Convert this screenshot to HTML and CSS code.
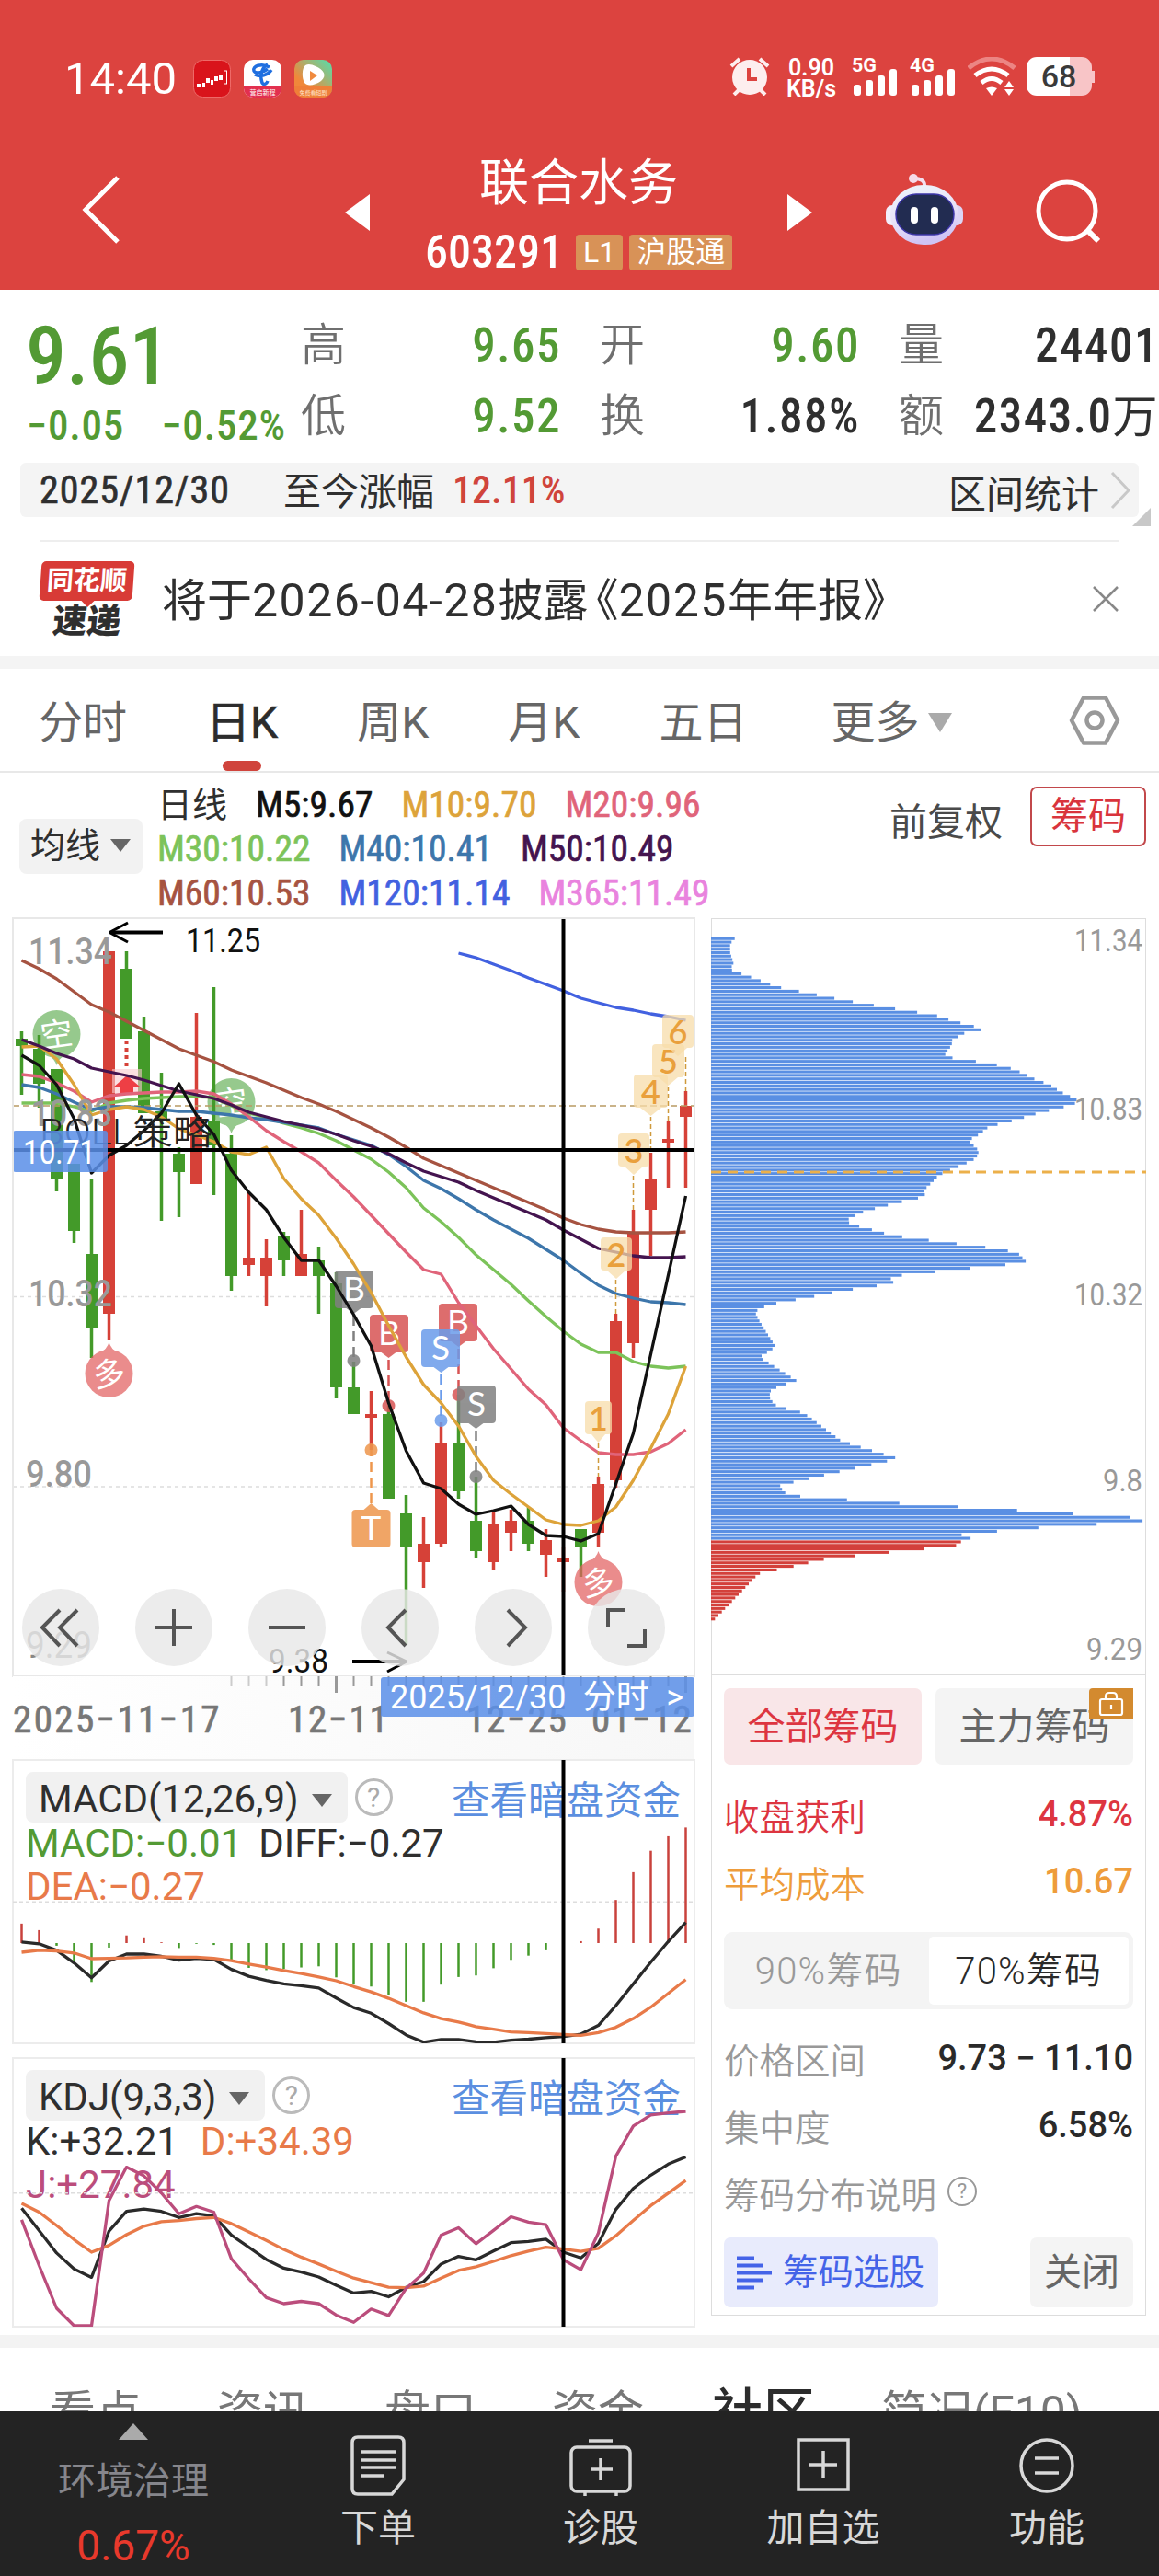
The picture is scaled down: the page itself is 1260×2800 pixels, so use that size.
FILE: index.html
```html
<!DOCTYPE html>
<html lang="zh-CN">
<head>
    <meta charset="UTF-8">
    <title>联合水务 603291</title>
    <link rel="stylesheet" href="styles.css">
</head>
<body>
<header class="top">
    <div class="status">
        <span class="clock">14:40</span>
        <svg class="app" viewBox="0 0 41 41"><rect x=".5" y=".5" width="40" height="40" rx="10" fill="#d9141b" stroke="#ee6a68"/><g fill="#fff"><rect x="4" y="26" width="5" height="4"/><rect x="10" y="25" width="3" height="5"/><rect x="14" y="20" width="4" height="5"/><rect x="19" y="22" width="3" height="5"/><rect x="23" y="18" width="4" height="5"/><rect x="28" y="16" width="4" height="6"/></g><rect x="33.500" y="12" width="3" height="14" fill="none" stroke="#fff"/></svg>
        <svg class="app" viewBox="0 0 41 41"><rect width="41" height="41" rx="10" fill="#fff"/><path d="M0 28h41v3a10 10 0 0 1-10 10H10A10 10 0 0 1 0 31z" fill="#e2304f"/><path d="M28 8c-9-5-19-1-17 4 2 4 11 1 15-2M26 5c-6 3-9 11-6 20 2 3 5 1 6-2M12 16c6 3 14 1 18-5" fill="none" stroke="#1f6fe0" stroke-width="3.500"/><text x="20.500" y="38" font-size="7" fill="#fff" text-anchor="middle">营启新程</text></svg>
        <svg class="app" viewBox="0 0 41 41"><defs><linearGradient id="play" x1="0" y1="1" x2="1" y2="0"><stop offset=".3" stop-color="#f0883a"/><stop offset="1" stop-color="#52e0ae"/></linearGradient></defs><rect width="41" height="41" rx="10" fill="url(#play)"/><path d="M0 28h41v3a10 10 0 0 1-10 10H10A10 10 0 0 1 0 31z" fill="#ef7f38"/><path d="M12 6c3-2 7-1 11 1 9 4 13 10 6 16-7 5-15 6-18 2-3-5-3-16 1-19z" fill="#fff"/><path d="M17 12l8 5-8 6z" fill="#f08a3e"/><text x="20.500" y="38" font-size="6" fill="#fde3c8" text-anchor="middle">免费看短剧</text></svg>
        <div class="status-right">
            <svg class="alarm" viewBox="0 0 44 42"><circle cx="22" cy="22" r="19" fill="#fdeeee"/><path d="M2 10l9-8M33 2l9 8M5 41l6-6M39 41l-6-6" stroke="#fdeeee" stroke-width="4"/><path d="M21 12v12h9" fill="none" stroke="#dc433f" stroke-width="4"/></svg>
            <div class="speed">0.90<br>KB/s</div>
            <svg class="signal" viewBox="0 0 50 42"><text x="0" y="16" font-size="21" font-weight="700" fill="#fff" textLength="27" lengthAdjust="spacingAndGlyphs">5G</text><g fill="#fff"><rect x="2" y="30" width="8" height="12" rx="3"/><rect x="15" y="25" width="8" height="17" rx="3"/><rect x="28" y="20" width="8" height="22" rx="3"/><rect x="41" y="13" width="8" height="29" rx="3"/></g></svg>
            <svg class="signal" viewBox="0 0 50 42"><text x="0" y="16" font-size="21" font-weight="700" fill="#fff" textLength="27" lengthAdjust="spacingAndGlyphs">4G</text><g fill="#fff"><rect x="2" y="30" width="8" height="12" rx="3"/><rect x="15" y="25" width="8" height="17" rx="3"/><rect x="28" y="20" width="8" height="22" rx="3"/><rect x="41" y="13" width="8" height="29" rx="3"/></g></svg>
            <svg class="wifi" viewBox="0 0 52 42"><g fill="none" stroke="#fff" stroke-width="5"><path d="M1 12q25-20 50 0" stroke="#ec8583"/><path d="M8 20q18-14 36 0"/><path d="M15 28q11-9 22 0"/></g><path d="M20 34q6-3 12 0l-6 8zM40 33l5-7 5 7zM40 35l5 7 5-7z" fill="#fff"/></svg>
            <svg class="battery" viewBox="0 0 74 42"><path d="M47 0h13a11 11 0 0 1 11 11v4h3v13h-3v3a11 11 0 0 1-11 11H47z" fill="#f8c5c7"/><path d="M11 0h36v42H11A11 11 0 0 1 0 31V11A11 11 0 0 1 11 0z" fill="#fff"/><text x="35" y="33" font-size="34" font-weight="500" fill="#3a3a3a" text-anchor="middle">68</text></svg>
        </div>
    </div>
    <nav class="title-bar">
        <svg class="back" viewBox="0 0 42 74"><path d="M39 2L4 37l35 35" fill="none" stroke="#fff" stroke-width="5"/></svg>
        <svg class="prev" viewBox="0 0 27 40"><path d="M27 0v40L0 20z" fill="#fff"/></svg>
        <div class="stock">
            <div class="stock-name">联合水务</div>
            <div class="stock-code"><span class="code">603291</span><span class="tag">L1</span><span class="tag">沪股通</span></div>
        </div>
        <svg class="next" viewBox="0 0 27 40"><path d="M0 0v40l27-20z" fill="#fff"/></svg>
        <svg class="robot" viewBox="0 0 84 78"><defs><linearGradient id="head" x1="0" y1="0" x2=".3" y2="1"><stop offset="0" stop-color="#eef6fb"/><stop offset=".6" stop-color="#e8e2f8"/><stop offset="1" stop-color="#cfc4f5"/></linearGradient></defs><path d="M42 14c1-7-5-9-11-9" fill="none" stroke="#f3dfee" stroke-width="4"/><circle cx="30" cy="5" r="5" fill="#f6dbe9"/><rect x="0" y="34" width="14" height="22" rx="7" fill="#f2eefb"/><rect x="70" y="34" width="14" height="22" rx="7" fill="#dcd5f5"/><rect x="5" y="12" width="74" height="65" rx="36" fill="url(#head)"/><rect x="11" y="22" width="63" height="44" rx="22" fill="#222c51" stroke="#3d36a8" stroke-width="1.500"/><rect x="27" y="36" width="8" height="18" rx="4" fill="#fff"/><rect x="49" y="36" width="8" height="18" rx="4" fill="#fff"/></svg>
        <svg class="search" viewBox="0 0 70 70"><circle cx="34" cy="34" r="31" fill="none" stroke="#fff" stroke-width="5"/><path d="M56 55l12 12" stroke="#fff" stroke-width="6"/></svg>
    </nav>
</header>

<section class="quote">
    <div class="price">
        <div class="last">9.61</div>
        <div class="change"><span>−0.05</span><span>−0.52%</span></div>
    </div>
    <div class="stats">
        <div class="stat"><label>高</label><b class="down">9.65</b></div>
        <div class="stat"><label>开</label><b class="down">9.60</b></div>
        <div class="stat"><label>量</label><b>24401</b></div>
        <div class="stat"><label>低</label><b class="down">9.52</b></div>
        <div class="stat"><label>换</label><b>1.88%</b></div>
        <div class="stat"><label>额</label><b>2343.0<i>万</i></b></div>
    </div>
</section>

<section class="range">
    <span class="range-date">2025/12/30</span>
    <span class="range-label">至今涨幅</span>
    <span class="range-pct">12.11%</span>
    <span class="range-stat">区间统计</span>
    <svg class="range-arrow" viewBox="0 0 22 42"><path d="M2 2l18 19L2 40" fill="none" stroke="#c8c8c8" stroke-width="3"/></svg>
    <i class="corner"></i>
</section>

<section class="notice">
    <div class="badge"><div class="badge-top">同花顺</div><div class="badge-bottom">速递</div></div>
    <div class="notice-text">将于<span>2026-04-28</span>披露<em>《</em><span>2025</span>年年报》</div>
    <svg class="close" viewBox="0 0 30 30"><path d="M2 2l26 26M28 2L2 28" stroke="#888" stroke-width="2.500"/></svg>
</section>

<nav class="period">
    <span>分时</span>
    <span class="on">日K</span>
    <span>周K</span>
    <span>月K</span>
    <span>五日</span>
    <span>更多<i class="tri"></i></span>
    <svg class="gear" viewBox="0 0 56 54"><path d="M16 2.500h24L53 27 40 51.500H16L3 27z" fill="none" stroke="#999" stroke-width="4.500" stroke-linejoin="round"/><circle cx="28" cy="27" r="8.500" fill="none" stroke="#999" stroke-width="4.500"/></svg>
</nav>

<section class="ma">
    <div class="ma-btn">均线<i class="tri"></i></div>
    <div class="ma-list">
        <div><em>日线</em><span class="m5">M5:9.67</span><span class="m10">M10:9.70</span><span class="m20">M20:9.96</span></div>
        <div><span class="m30">M30:10.22</span><span class="m40">M40:10.41</span><span class="m50">M50:10.49</span></div>
        <div><span class="m60">M60:10.53</span><span class="m120">M120:11.14</span><span class="m365">M365:11.49</span></div>
    </div>
    <div class="ma-right"><span>前复权</span><span class="chip-btn">筹码</span></div>
</section>

<main class="charts">
    <div class="left">
        <div class="kline">
            <svg id="kline" width="741" height="823" viewBox="14 998 741 823"></svg>
            <div class="tools">
                <svg viewBox="0 0 84 84"><path d="M41 23L22 42l19 20M60 23L41 42l19 20"/></svg>
                <svg viewBox="0 0 84 84"><path d="M22 42h40M42 22v40"/></svg>
                <svg viewBox="0 0 84 84"><path d="M22 42h40"/></svg>
                <svg viewBox="0 0 84 84"><path d="M48 23L29 42l19 20"/></svg>
                <svg viewBox="0 0 84 84"><path d="M36 23l19 19-19 20"/></svg>
                <svg viewBox="0 0 84 84"><path d="M22 41V23h19M43 62h19V44"/></svg>
            </div>
        </div>
        <div class="axis">
            <svg id="ticks" width="741" height="20" viewBox="14 1822 741 20"></svg>
            <div class="dates"><span>2025−11−17</span><span>12−11</span><span>12−25</span><span>01−12</span></div>
            <div class="day-tip"><span>2025/12/30</span><span>分时</span><span>&gt;</span></div>
        </div>
        <div class="indicator macd">
            <svg id="macd" class="plot" width="741" height="308"></svg>
            <div class="ind-head"><span class="pill">MACD(12,26,9)<i class="tri"></i></span><span class="help">?</span><a>查看暗盘资金</a></div>
            <div class="ind-val"><span class="down">MACD:−0.01</span><span>DIFF:−0.27</span></div>
            <div class="ind-val"><span class="dea">DEA:−0.27</span></div>
        </div>
        <div class="indicator kdj">
            <svg id="kdj" class="plot" width="741" height="292"></svg>
            <div class="ind-head"><span class="pill">KDJ(9,3,3)<i class="tri"></i></span><span class="help">?</span><a>查看暗盘资金</a></div>
            <div class="ind-val"><span>K:+32.21</span><span class="dea">D:+34.39</span></div>
            <div class="ind-val"><span class="j">J:+27.84</span></div>
        </div>
    </div>

    <div class="chips">
        <svg id="chips" width="473" height="821" viewBox="773 998 473 821"></svg>
        <div class="chip-panel">
            <div class="chip-tabs">
                <span class="on">全部筹码</span>
                <span>主力筹码<svg class="lock" viewBox="0 0 48 34"><path d="M4 0h44v34H0V4a4 4 0 0 1 4-4z" fill="#d38a2f"/><g fill="none" stroke="#fff" stroke-width="2.200"><rect x="12" y="12" width="24" height="17" rx="2"/><path d="M18 12V9q0-4 4-4h4q4 0 4 4v3M24 18v5"/></g></svg></span>
            </div>
            <div class="row red"><span>收盘获利</span><b>4.87%</b></div>
            <div class="row gold"><span>平均成本</span><b>10.67</b></div>
            <div class="segment"><span>90%筹码</span><span class="on">70%筹码</span></div>
            <div class="row"><span>价格区间</span><b>9.73 − 11.10</b></div>
            <div class="row"><span>集中度</span><b>6.58%</b></div>
            <div class="row"><span>筹码分布说明</span><span class="help">?</span></div>
            <div class="chip-foot">
                <span class="pick"><svg viewBox="0 0 38 37"><path d="M0 2.500h19M0 10.500h29M0 18.500h38M0 26.500h29M0 34.500h19" stroke="#4463e8" stroke-width="4"/></svg>筹码选股</span>
                <span class="shut">关闭</span>
            </div>
        </div>
    </div>
</main>

<nav class="news">
    <span>看点</span><span>资讯</span><span>盘口</span><span>资金</span><span class="on">社区</span><span>简况(F10)</span>
</nav>

<footer class="dock">
    <div class="sector"><i></i><span>环境治理</span><b>0.67%</b></div>
    <div class="item"><svg viewBox="0 0 70 66"><path d="M13 2h44q6 0 6 6v40L50 64H13q-6 0-6-6V8q0-6 6-6zM16 18h38M16 27h38M16 35h38M16 44h26"/></svg><span>下单</span></div>
    <div class="item"><svg viewBox="0 0 70 66"><rect x="3" y="13" width="64" height="48" rx="6"/><path d="M22 6h26M24 37h24M35 25v24M18 62v4M52 62v4"/></svg><span>诊股</span></div>
    <div class="item"><svg viewBox="0 0 70 66"><rect x="8" y="5" width="54" height="54"/><path d="M20 32h30M35 17v30"/></svg><span>加自选</span></div>
    <div class="item"><svg viewBox="0 0 70 66"><circle cx="35" cy="33" r="28"/><path d="M22 25h26M22 41h26"/></svg><span>功能</span></div>
</footer>
<script src="charts.js"></script>
</body>
</html>
```
FILE: styles.css
```css
* {
    box-sizing: border-box;
}

body, p, nav {
    margin: 0;
    padding: 0;
}

body {
    width: 1260px;
    height: 2800px;
    overflow: hidden;
    background: #fff;
    color: #2f2f2f;
    font-family: Roboto, "Noto Sans CJK SC", sans-serif;
    font-size: 41px;
}

svg {
    display: block;
    flex: none;
}

i, em {
    font-style: normal;
}

.down {
    color: #539a34;
}

.tri {
    display: inline-block;
    border: 11px solid transparent;
    border-top: 14px solid #666;
    border-bottom: 0;
}

.help {
    display: block;
    width: 41px;
    height: 41px;
    border: 3px solid #bbb;
    border-radius: 50%;
    color: #aaa;
    font-size: 30px;
    line-height: 36px;
    text-align: center;
}

/* header */
.top {
    height: 315px;
    background: #dc433f;
    color: #fff;
}

.status {
    display: flex;
    align-items: center;
    height: 170px;
    padding: 0 70px;
}

.clock {
    width: 140px;
    font-size: 49px;
}

.app {
    width: 41px;
    height: 41px;
    margin-right: 14px;
}

.status-right {
    display: flex;
    margin-left: auto;
}

.alarm {
    width: 44px;
    height: 42px;
    margin-right: 17px;
}

.speed {
    width: 56px;
    margin-right: 16px;
    font-size: 25px;
    font-weight: 600;
    line-height: 23px;
    text-align: center;
}

.signal {
    width: 50px;
    height: 42px;
    margin-right: 13px;
}

.wifi {
    width: 52px;
    height: 42px;
    margin-right: 12px;
}

.battery {
    width: 74px;
    height: 42px;
}

.title-bar {
    display: flex;
    height: 145px;
    padding-left: 89px;
}

.back {
    width: 42px;
    height: 74px;
    margin-top: 21px;
}

.prev, .next {
    width: 27px;
    height: 40px;
    margin-top: 41px;
}

.prev {
    margin-left: 244px;
}

.stock {
    width: 454px;
    text-align: center;
}

.stock-name {
    height: 76px;
    padding-top: 3px;
    font-size: 54px;
    line-height: 54px;
}

.stock-code {
    display: flex;
    align-items: center;
    height: 56px;
    padding-left: 60px;
}

.code {
    width: 147px;
    margin-right: 17px;
    font-size: 50px;
    font-stretch: 75%;
    font-weight: 500;
    text-align: left;
}

.tag {
    height: 39px;
    margin-right: 7px;
    padding: 0 8px;
    border-radius: 4px;
    background: #d89257;
    font-size: 32px;
    line-height: 38px;
}

.robot {
    width: 84px;
    height: 78px;
    margin: 19px 0 0 80px;
}

.search {
    width: 70px;
    height: 70px;
    margin: 25px 0 0 79px;
}

/* quote */
.quote {
    display: flex;
    height: 188px;
    padding: 26px 0 0 28px;
}

.price {
    width: 299px;
    color: #539a34;
    font-weight: 500;
    font-stretch: 75%;
}

.last {
    height: 96px;
    font-size: 88px;
    line-height: 92px;
}

.change {
    display: flex;
    justify-content: space-between;
    padding: 0 16px 0 1px;
    font-size: 45px;
    font-stretch: 87%;
    letter-spacing: .8px;
    line-height: 52px;
}

.stats {
    display: grid;
    grid-template-columns: 281px 281px 281px;
    grid-auto-rows: 77px;
    column-gap: 44px;
}

.stat {
    display: flex;
    justify-content: space-between;
    line-height: 70px;
}

.stat label {
    color: #6f6f6f;
    font-size: 49px;
    font-weight: 350;
}

.stat b {
    margin-right: -2px;
    font-size: 51px;
    font-weight: 500;
    font-stretch: 83%;
    letter-spacing: 1.500px;
    white-space: nowrap;
}

.stat i {
    font-size: 49px;
    font-weight: 400;
}

.range {
    position: relative;
    display: flex;
    align-items: center;
    height: 59px;
    margin: 0 22px;
    padding: 0 9px 0 21px;
    border-radius: 6px;
    background: #f4f4f4;
}

.range-date {
    width: 265px;
    font-size: 42px;
    font-stretch: 77%;
    letter-spacing: 1px;
    -webkit-text-stroke: .7px;
}

.range-label {
    margin: -3px 20px 0 0;
}

.range-pct {
    color: #d0443c;
    font-size: 42px;
    font-stretch: 81%;
    font-weight: 500;
}

.range-stat {
    margin: 3px 12px 0 auto;
}

.range-arrow {
    width: 22px;
    height: 42px;
}

.corner {
    position: absolute;
    right: -13px;
    bottom: -10px;
    border: 10px solid #c8c8c8;
    border-top-color: transparent;
    border-left-color: transparent;
}

.notice {
    display: flex;
    align-items: center;
    height: 126px;
    margin: 25px 43px 0;
    border-top: 2px solid #eee;
}

.badge {
    width: 101px;
    margin: 0 31px 0 1px;
    line-height: 1;
    text-align: center;
}

.badge-top {
    position: relative;
    height: 43px;
    background: #d83b36;
    border-radius: 5px;
    color: #fff;
    font-size: 29px;
    font-weight: 700;
    line-height: 42px;
    transform: skewX(-4deg);
}

.badge-top::after {
    content: "";
    position: absolute;
    left: 45px;
    top: 42px;
    border: 8px solid transparent;
    border-top-color: #d83b36;
    border-bottom: 0;
}

.badge-bottom {
    margin-top: 6px;
    font-size: 37px;
    font-weight: 900;
    line-height: 34px;
    transform: skewX(-6deg);
}

.notice-text {
    margin-top: -5px;
    font-size: 49px;
    white-space: nowrap;
}

.notice-text span {
    font-size: 50px;
    letter-spacing: 1.500px;
}

.notice-text em {
    margin-left: -16px;
}

.close {
    width: 30px;
    height: 30px;
    margin-left: auto;
}

/* period tabs */
.period {
    position: relative;
    display: flex;
    height: 127px;
    padding: 0 42px;
    border-top: 14px solid #f4f4f4;
    border-bottom: 2px solid #e8e8e8;
    color: #666;
    font-size: 48px;
    line-height: 118px;
}

.period span {
    position: relative;
    margin-right: 86px;
    white-space: nowrap;
}

.period .on {
    color: #2c2c2c;
    -webkit-text-stroke: .6px;
}

.period .on::after {
    content: "";
    position: absolute;
    left: 18px;
    bottom: 0;
    width: 42px;
    height: 11px;
    border-radius: 6px;
    background: #d0443c;
}

.period .tri {
    margin-left: 10px;
    border-width: 21px 13px 0;
    border-top-color: #aaa;
    vertical-align: 6px;
}

.period span:nth-child(6) {
    margin: 0 0 0 5px;
}

.gear {
    width: 56px;
    height: 54px;
    margin: 29px 0 0 auto;
}

.ma {
    display: flex;
    height: 158px;
    padding: 11px 14px 0 21px;
}

.ma-btn {
    width: 134px;
    height: 60px;
    margin: 39px 16px 0 0;
    padding-left: 12px;
    border-radius: 8px;
    background: #f2f2f2;
    font-size: 38px;
    line-height: 59px;
}

.ma-btn .tri {
    margin-left: 11px;
    vertical-align: 6px;
}

.ma-list {
    font-size: 39.500px;
    font-stretch: 79%;
    line-height: 48px;
    -webkit-text-stroke: .7px;
}

.ma-list div {
    display: flex;
}

.ma-list em {
    margin-right: 31px;
    font-size: 38px;
    -webkit-text-stroke: 0;
}

.ma-list span {
    margin-right: 31px;
}

.m5 { color: #111; }
.m10 { color: #dda33a; }
.m20 { color: #e0647a; }
.m30 { color: #7cc35a; }
.m40 { color: #3d76ab; }
.m50 { color: #44144f; }
.m60 { color: #a65341; }
.m120 { color: #4261e0; }
.m365 { color: #e983de; }

.ma-right {
    display: flex;
    margin-left: auto;
    color: #4a4a4a;
    line-height: 61px;
}

.ma-right span:first-child {
    margin: 13px 30px 0 0;
}

.chip-btn {
    width: 126px;
    height: 65px;
    margin-top: 4px;
    border: 2px solid #c2484b;
    border-radius: 7px;
    color: #d9343c;
    text-align: center;
}

/* charts */
.charts {
    display: flex;
    justify-content: space-between;
    height: 1540px;
    padding: 0 14px;
}

.left {
    width: 741px;
}

.kline {
    position: relative;
    height: 824px;
    outline: 2px solid #e8e8e8;
    outline-offset: -1px;
}

.tools {
    position: absolute;
    left: 10px;
    top: 729px;
    display: flex;
    gap: 39px;
}

.tools svg {
    width: 84px;
    height: 84px;
    border-radius: 50%;
    background: rgba(232, 232, 232, .82);
    fill: none;
    stroke: #555;
    stroke-width: 4;
}

.axis {
    position: relative;
    height: 91px;
    background: linear-gradient(90deg, #fff, #f7f7f7);
}

.dates {
    display: grid;
    grid-template-columns: 299px 194px 136px auto;
    color: #777;
    font-size: 41px;
    font-stretch: 79%;
    letter-spacing: 1.800px;
    line-height: 55px;
    white-space: nowrap;
}

.dates span {
    -webkit-text-stroke: .7px;
}

.dates span:first-child {
    letter-spacing: 2.400px;
}

.day-tip {
    position: absolute;
    right: 0;
    top: 1px;
    display: flex;
    justify-content: space-between;
    width: 341px;
    height: 43px;
    padding: 0 12px 0 10px;
    border-radius: 3px;
    background: rgba(91, 143, 232, .86);
    color: #fff;
    font-size: 36px;
    line-height: 44px;
}

.indicator {
    position: relative;
    outline: 2px solid #ececec;
    outline-offset: -1px;
}

.macd {
    height: 308px;
    margin-bottom: 16px;
}

.kdj {
    height: 292px;
}

.plot {
    position: absolute;
    left: 0;
    top: 0;
    z-index: 1;
}

.ind-head {
    display: flex;
    align-items: center;
    height: 67px;
    padding: 14px 15px 0 14px;
}

.pill {
    height: 55px;
    margin-right: 8px;
    padding: 0 17px 0 14px;
    border-radius: 8px;
    background: #f1f1f1;
    line-height: 59px;
    font-size: 42px;
    font-stretch: 99%;
}

.pill .tri {
    margin-left: 14px;
    vertical-align: 6px;
}

.ind-head a {
    margin-left: auto;
    color: #5b8fe0;
    font-size: 41.500px;
}

.ind-val {
    display: flex;
    gap: 18px;
    padding-left: 14px;
    font-size: 42px;
    font-stretch: 98%;
    line-height: 47px;
}

.dea {
    color: #e87a49;
}

.j {
    color: #bb4d7c;
}

.kdj .ind-val {
    gap: 24px;
    font-stretch: 92%;
}

/* chip distribution */
.chips {
    width: 473px;
    height: 1519px;
    border: 1px solid #ddd;
}

.chips > svg {
    margin-left: -1px;
}

.chip-panel {
    padding: 14px 13px 0;
    border-top: 1px solid #ddd;
}

.chip-tabs {
    display: flex;
    justify-content: space-between;
    margin-bottom: 17px;
}

.chip-tabs span {
    position: relative;
    width: 215px;
    height: 83px;
    border-radius: 7px;
    background: #f4f4f4;
    color: #666;
    line-height: 85px;
    text-align: center;
}

.chip-tabs .on {
    background: #f9e6e8;
    color: #dd3540;
}

.lock {
    position: absolute;
    right: 0;
    top: 0;
    width: 48px;
    height: 34px;
}

.row {
    display: flex;
    align-items: center;
    justify-content: space-between;
    height: 73px;
    color: #999;
    font-size: 38.500px;
    font-weight: 350;
}

.row b {
    color: #2a2a2a;
    font-size: 38px;
    font-stretch: 92%;
    font-weight: 500;
}

.row.red, .row.red b {
    color: #dd3540;
}

.row.gold, .row.gold b {
    color: #ee9c3b;
}

.row .help {
    width: 32px;
    height: 32px;
    margin: -2px auto 0 12px;
    border-width: 2px;
    border-color: #999;
    color: #999;
    font-size: 22px;
    font-weight: 400;
    line-height: 28px;
}

.segment {
    display: flex;
    height: 84px;
    margin: 19px 0 16px;
    padding: 5px;
    border-radius: 9px;
    background: #f4f4f4;
    color: #999;
    font-size: 40px;
    font-weight: 350;
    letter-spacing: 1.200px;
    line-height: 76px;
    text-align: center;
}

.segment span {
    flex: 1;
}

.segment .on {
    border-radius: 5px;
    background: #fff;
    color: #2a2a2a;
}

.chip-foot {
    display: flex;
    justify-content: space-between;
    margin-top: 13px;
    line-height: 76px;
}

.pick {
    display: flex;
    align-items: center;
    gap: 12px;
    width: 233px;
    height: 76px;
    padding-left: 14px;
    border-radius: 7px;
    background: #e8ebfc;
    color: #4463e8;
    font-size: 38.500px;
}

.pick svg {
    width: 38px;
    height: 37px;
}

.shut {
    width: 112px;
    height: 76px;
    border-radius: 7px;
    background: #f4f4f4;
    color: #666;
    text-align: center;
}

/* bottom */
.news {
    display: flex;
    height: 83px;
    padding-left: 54px;
    border-top: 14px solid #f3f3f3;
    color: #777;
    font-size: 50px;
    line-height: 143px;
    overflow: hidden;
}

.news span {
    margin-right: 82px;
    white-space: nowrap;
}

.news span:nth-child(4) {
    margin-right: 74px;
}

.news .on {
    margin-right: 72px;
    color: #2c2c2c;
    font-size: 56px;
    font-weight: 500;
}

.dock {
    display: grid;
    grid-template-columns: 290px 242px 242px 242px 244px;
    height: 179px;
    background: #232323;
    color: #d8d8d8;
    text-align: center;
}

.sector {
    display: flex;
    flex-direction: column;
    align-items: center;
    padding-top: 13px;
    color: #86868c;
}

.sector i {
    border: 16px solid transparent;
    border-top: 0;
    border-bottom: 18px solid #aaa;
}

.sector span {
    margin-top: 16px;
    line-height: 58px;
}

.sector b {
    margin-top: 11px;
    color: #e8392c;
    font-size: 46px;
    font-stretch: 93%;
    font-weight: 400;
    line-height: 60px;
}

.item {
    padding-top: 26px;
}

.item svg {
    width: 70px;
    height: 66px;
    margin: 0 auto;
    fill: none;
    stroke: #d8d8d8;
    stroke-width: 3.500;
}

.item span {
    display: block;
    margin-top: 6px;
    line-height: 58px;
}
```
FILE: charts.js
```js
var STEP = 19, X0 = 23.5;
var RED = '#d64138', GREEN = '#439a29';

function px(i) {
    return X0 + STEP * i;
}

function rect(x, y, w, h, fill, extra) {
    return '<rect x="' + x + '" y="' + y + '" width="' + w + '" height="' + h + '" fill="' + fill + '" ' + (extra || '') + '/>';
}

function line(x1, y1, x2, y2, color, w, extra) {
    return '<path d="M' + x1 + ' ' + y1 + 'L' + x2 + ' ' + y2 + '" stroke="' + color + '" stroke-width="' + w + '" fill="none" ' + (extra || '') + '/>';
}

function poly(ys, start, color, w, toY) {
    var d = ys.map(function (y, k) {
        return (k ? 'L' : 'M') + px(start + k) + ' ' + (toY ? toY(y) : y).toFixed(1);
    }).join('');
    return '<path d="' + d + '" stroke="' + color + '" stroke-width="' + w + '" fill="none" stroke-linejoin="round"/>';
}

function text(s, x, y, size, color, w, extra) {
    return '<text x="' + x + '" y="' + y + '" font-size="' + size + '" fill="' + color + '" ' +
        (w ? 'textLength="' + w + '" lengthAdjust="spacingAndGlyphs" ' : '') + (extra || '') + '>' + s + '</text>';
}

// [high, body top, body bottom, low, up?]
var candles = [
    [1121, 1129, 1137, 1190, 0], [1125, 1140, 1178, 1204, 0], [1162, 1162, 1282, 1295, 0],
    [1265, 1265, 1338, 1351, 0], [1282, 1363, 1444, 1476, 0], [1034, 1034, 1428, 1456, 1],
    [1034, 1053, 1129, 1129, 0], [1105, 1121, 1210, 1210, 0], [1166, 1208, 1216, 1327, 0],
    [1247, 1254, 1274, 1323, 0], [1101, 1214, 1287, 1287, 1], [1073, 1218, 1245, 1299, 0],
    [1234, 1254, 1387, 1403, 0], [1296, 1367, 1375, 1387, 1], [1347, 1367, 1387, 1420, 1],
    [1339, 1343, 1370, 1387, 0], [1315, 1363, 1387, 1387, 1], [1355, 1370, 1387, 1428, 0],
    [1383, 1395, 1508, 1520, 0], [1480, 1508, 1537, 1537, 0], [1512, 1537, 1541, 1576, 1],
    [1528, 1537, 1629, 1629, 0], [1625, 1645, 1682, 1788, 0], [1649, 1678, 1698, 1726, 1],
    [1546, 1569, 1678, 1682, 1], [1516, 1569, 1621, 1629, 0], [1605, 1653, 1686, 1694, 0],
    [1644, 1657, 1698, 1706, 1], [1641, 1653, 1666, 1686, 1], [1638, 1653, 1678, 1686, 0],
    [1662, 1674, 1690, 1714, 1], [1682, 1694, 1698, 1730, 1], [1662, 1662, 1682, 1714, 0],
    [1605, 1613, 1666, 1682, 1], [1428, 1436, 1609, 1617, 1], [1315, 1339, 1460, 1476, 1],
    [1253, 1282, 1315, 1365, 1], [1218, 1238, 1242, 1291, 1], [1186, 1202, 1214, 1291, 1]
];

var averages = [
    ['#a65341', 0, [1044, 1053, 1064, 1078, 1092, 1100, 1110, 1120, 1130, 1140, 1147, 1154, 1163, 1170, 1177, 1185, 1193, 1200, 1208, 1217, 1226, 1236, 1247, 1259, 1267, 1275, 1283, 1291, 1299, 1307, 1315, 1324, 1331, 1336, 1339, 1340, 1340, 1340, 1339]],
    ['#4261e0', 25, [1036, 1041, 1048, 1055, 1063, 1070, 1077, 1085, 1090, 1095, 1098, 1102, 1105, 1109]],
    ['#7cc35a', 0, [1199, 1199, 1199, 1203, 1208, 1199, 1196, 1194, 1193, 1192, 1192, 1193, 1202, 1210, 1215, 1221, 1226, 1232, 1240, 1250, 1260, 1274, 1291, 1313, 1328, 1345, 1364, 1380, 1396, 1414, 1431, 1447, 1461, 1470, 1470, 1480, 1485, 1487, 1485]],
    ['#3d76ab', 0, [1179, 1182, 1189, 1198, 1206, 1203, 1203, 1204, 1206, 1208, 1208, 1210, 1212, 1215, 1217, 1220, 1223, 1226, 1233, 1239, 1245, 1255, 1268, 1283, 1292, 1303, 1315, 1326, 1336, 1346, 1358, 1370, 1384, 1397, 1406, 1411, 1415, 1416, 1418]],
    ['#e0647a', 0, [1168, 1170, 1177, 1186, 1198, 1191, 1189, 1188, 1187, 1187, 1186, 1189, 1200, 1214, 1229, 1241, 1252, 1264, 1283, 1301, 1321, 1341, 1361, 1380, 1385, 1416, 1441, 1466, 1488, 1510, 1527, 1552, 1566, 1579, 1581, 1581, 1578, 1569, 1554]],
    ['#dda33a', 0, [1138, 1137, 1151, 1179, 1212, 1206, 1203, 1206, 1214, 1227, 1234, 1241, 1252, 1255, 1247, 1281, 1303, 1321, 1346, 1374, 1405, 1441, 1475, 1505, 1525, 1550, 1583, 1609, 1624, 1638, 1652, 1657, 1658, 1653, 1638, 1609, 1574, 1537, 1485]],
    ['#44144f', 0, [1130, 1137, 1145, 1151, 1161, 1165, 1169, 1174, 1180, 1186, 1190, 1194, 1201, 1209, 1214, 1219, 1223, 1227, 1233, 1240, 1246, 1254, 1264, 1273, 1279, 1285, 1294, 1302, 1310, 1318, 1326, 1337, 1347, 1357, 1361, 1365, 1367, 1367, 1366]],
    ['#111', 0, [1147, 1158, 1179, 1216, 1275, 1256, 1245, 1229, 1210, 1178, 1212, 1233, 1272, 1296, 1315, 1345, 1370, 1370, 1398, 1429, 1463, 1525, 1577, 1612, 1618, 1635, 1646, 1642, 1637, 1657, 1669, 1670, 1675, 1667, 1613, 1558, 1472, 1386, 1300]]
];

// balloon with a letter, a dashed leader and a dot on the candle
function flag(s, x, y, cx, dotY, color, up) {
    var tail = up ? 'M' + (cx - 8) + ' ' + y + 'l8 -7l8 7z' : 'M' + (cx - 8) + ' ' + (y + 41) + 'l8 6l8 -6z';
    return line(cx, up ? y - 7 : y + 49, cx, dotY, color, 2.5, 'stroke-dasharray="11 6"') +
        '<g fill="' + color + '" opacity=".85"><circle cx="' + cx + '" cy="' + dotY + '" r="7"/>' +
        rect(x, y, 42, 41, color, 'rx="4"') + '<path d="' + tail + '"/></g>' +
        text(s, x + 21, y + 33, 37, '#fff', 0, 'text-anchor="middle" font-family="Lato"');
}

function pin(s, cx, cy, color, dir) {
    return '<g opacity=".72"><circle cx="' + cx + '" cy="' + cy + '" r="26" fill="' + color + '"/><path d="M' +
        (cx - 10) + ' ' + (cy + 22 * dir) + 'Q' + (cx - 2) + ' ' + (cy + 27 * dir) + ' ' + cx + ' ' + (cy + 34 * dir) +
        'Q' + (cx + 2) + ' ' + (cy + 27 * dir) + ' ' + (cx + 10) + ' ' + (cy + 22 * dir) + 'z" fill="' + color + '"/></g>' +
        text(s, cx, cy + 13, 35, '#fff', 0, 'text-anchor="middle" transform="rotate(-8 ' + cx + ' ' + cy + ')"');
}

function count(n, x, y, w, cx, to) {
    return line(cx, y + 46, cx, to, '#cf9a3c', 1.5, 'stroke-dasharray="5 3"') +
        '<g opacity=".75">' + rect(x, y, w, 36, '#f8ddaa', 'rx="4"') +
        '<path d="M' + (x + 7) + ' ' + (y + 36) + 'l' + (w / 2 - 7) + ' 9l' + (w / 2 - 7) + ' -9z" fill="#f8ddaa"/></g>' +
        text(n, x + w / 2, y + 32, 36, '#e9a03c', 0, 'text-anchor="middle" font-family="Lato" font-weight="600"');
}

function drawKline() {
    var s = '';
    var dash = 'stroke-dasharray="4 4"';
    s += line(14, 1409.5, 755, 1409.5, '#ddd', 1.5, dash) + line(14, 1616, 755, 1616, '#ddd', 1.5, dash);
    s += pin('空', 61.5, 1124, '#6fb562', 1) + pin('空', 251.5, 1198, '#6fb562', 1);
    candles.forEach(function (c, i) {
        var color = c[4] ? RED : GREEN;
        s += line(px(i), c[0], px(i), c[3], color, 3.5) + rect(px(i) - 6.5, c[1], 13, c[2] - c[1], color);
    });
    s += line(14, 1202, 755, 1202, '#b99a63', 1.5, 'stroke-dasharray="7 4"');
    s += rect(122, 1162, 32, 26, '#f9c9cf', 'opacity=".6"') + line(137.5, 1131, 137.5, 1162, RED, 4, dash) +
        '<path d="M123 1182l15 -13l15 13h-8v6h-14v-6z" fill="#ee3f45"/>';
    s += pin('多', 118.5, 1493, '#e26060', -1) + pin('多', 650.5, 1720, '#e26060', -1);
    s += flag('B', 364, 1381, 384.5, 1479, '#808080') + flag('B', 402, 1429, 422.5, 1528, '#d85454') +
        flag('B', 477, 1417, 498.5, 1516, '#d85454') + flag('S', 458, 1445, 479.5, 1544, '#6b9ceb') +
        flag('S', 497, 1506, 517.5, 1605, '#808080') + flag('T', 382.5, 1641, 403.5, 1576, '#ee964c', true);
    averages.forEach(function (a) {
        s += poly(a[2], a[1], a[0], 3.3);
    });
    s += text('11.34', 31, 1048, 40, '#999', 91, 'font-weight="500"') + text('10.83', 34, 1224, 40, '#999', 88, 'font-weight="500"') +
        text('10.32', 31, 1420, 40, '#999', 91, 'font-weight="500"') + text('9.80', 28, 1616, 40, '#999', 72, 'font-weight="500"') +
        text('9.29', 28, 1802, 40, '#888', 72);
    s += count('1', 636, 1523, 29, 650.5, 1605) + count('2', 653, 1345, 34, 669.5, 1428) +
        count('3', 672, 1232, 34, 688.5, 1315) + count('4', 689, 1168, 37, 707.5, 1253) +
        count('5', 709, 1135, 35, 726.5, 1218) + count('6', 720, 1103, 34, 745.5, 1186);
    s += text('BOLL策略', 43, 1244, 38, '#222', 188, 'font-weight="350"');
    s += line(14, 1250, 755, 1250, '#000', 4) + line(612.5, 998, 612.5, 1821, '#000', 4);
    s += rect(14, 1229, 103, 45, '#5b8fe8', 'rx="3" opacity=".86"') + text('10.71', 25, 1265, 36, '#fff', 79);
    s += line(177, 1013.5, 121, 1013.5, '#000', 4) + line(139, 1003, 119, 1013.5, '#000', 3) + line(139, 1024, 119, 1013.5, '#000', 3) +
        text('11.25', 202, 1035, 36, '#111', 81);
    s += line(383, 1806, 440, 1806, '#000', 4) + line(421, 1796, 442, 1806, '#000', 3) + line(421, 1817, 442, 1806, '#000', 3) +
        text('9.38', 292, 1818, 36, '#111', 65);
    document.getElementById('kline').innerHTML = s;

    s = '';
    for (var i = 12; i < 39; i++) {
        s += line(px(i), 1822, px(i), i % 10 === 8 ? 1840 : 1833, i < 15 ? '#ccc' : '#999', i % 10 === 8 ? 3 : 2);
    }
    document.getElementById('ticks').innerHTML = s;
}

var macdBars = [485, 502, 543, 585, 638, 548, 516, 521, 534, 549, 538, 541, 580, 601, 607, 604, 600, 597, 626, 645, 650, 671, 690, 690, 645, 625, 621, 602, 580, 569, 555, 541, 531, 498, 423, 350, 294, 256, 233];
var diff = [533, 538, 555, 588, 627, 583, 565, 565, 571, 581, 576, 579, 605, 623, 634, 643, 648, 654, 680, 705, 720, 747, 777, 796, 789, 789, 795, 796, 791, 788, 784, 781, 775, 752, 700, 643, 586, 532, 482];
var dea = [560, 555, 557, 562, 577, 576, 575, 573, 572, 573, 573, 576, 582, 591, 599, 608, 616, 625, 635, 650, 664, 681, 700, 719, 734, 743, 755, 762, 769, 771, 773, 776, 778, 771, 757, 734, 704, 668, 632];
var kLine = [1230, 1288, 1347, 1389, 1411, 1290, 1238, 1232, 1238, 1254, 1244, 1250, 1300, 1332, 1364, 1387, 1397, 1410, 1432, 1452, 1448, 1462, 1437, 1422, 1376, 1356, 1365, 1342, 1320, 1317, 1311, 1345, 1360, 1322, 1233, 1178, 1143, 1114, 1095];
var dLine = [1217, 1240, 1275, 1312, 1345, 1327, 1299, 1277, 1265, 1262, 1257, 1254, 1270, 1292, 1314, 1338, 1358, 1376, 1395, 1413, 1425, 1437, 1438, 1434, 1413, 1393, 1383, 1369, 1354, 1342, 1332, 1337, 1343, 1335, 1302, 1262, 1223, 1190, 1157];
var jLine = [1260, 1380, 1492, 1538, 1538, 1210, 1122, 1145, 1190, 1244, 1225, 1240, 1362, 1415, 1464, 1480, 1474, 1480, 1510, 1529, 1494, 1511, 1440, 1400, 1300, 1281, 1323, 1288, 1252, 1266, 1273, 1365, 1391, 1295, 1093, 1014, 985, 980, 976];

function scale(top) {
    return function (v) {
        return (v - top) / 2.412;
    };
}

function drawMacd() {
    var y = scale(56);
    var s = line(0, y(428), 741, y(428), '#ddd', 1.5, 'stroke-dasharray="4 3"');
    macdBars.forEach(function (v, i) {
        s += line(px(i) - 14, y(536), px(i) - 14, y(v), v < 536 ? '#c9423c' : GREEN, 2.5);
    });
    s += '<g transform="translate(-14 0)">' + poly(diff, 0, '#2a2a2a', 3.3, y) + poly(dea, 0, '#e87a49', 3.3, y) + '</g>';
    s += line(598.5, 0, 598.5, 308, '#000', 4);
    document.getElementById('macd').innerHTML = s;
}

function drawKdj() {
    var y = scale(836);
    var s = line(0, y(1190), 741, y(1190), '#ddd', 1.5, 'stroke-dasharray="4 3"');
    s += '<g transform="translate(-14 0)">' + poly(kLine, 0, '#2a2a2a', 3.3, y) + poly(dLine, 0, '#e87a49', 3.3, y) + poly(jLine, 0, '#bb4d7c', 3.3, y) + '</g>';
    s += line(598.5, 0, 598.5, 292, '#000', 4);
    document.getElementById('kdj').innerHTML = s;
}

// outline of the cost distribution: row, length
var profile = [57, 117, 63, 108, 70, 102, 85, 102, 98, 108, 106, 114, 113, 108, 121, 105, 128, 135, 150, 230, 157, 262, 171, 375, 185, 487,
    199, 620, 214, 770, 221, 806, 228, 842, 235, 886, 243, 930, 250, 870, 257, 850, 264, 827, 275, 825, 285, 815, 293, 803, 300, 808,
    307, 882, 314, 957, 322, 1011, 328, 1038, 343, 1086, 357, 1144, 371, 1179, 379, 1203, 386, 1230, 393, 1237, 400, 1208, 414, 1114,
    429, 1036, 443, 947, 458, 917, 472, 878, 479, 892, 493, 914, 508, 905, 522, 860, 529, 831, 543, 782, 558, 760, 573, 735, 587, 738,
    594, 682, 608, 593, 622, 518, 637, 479, 644, 503, 658, 584, 666, 626, 680, 795, 694, 978, 702, 1040, 722, 1070, 730, 951, 737, 833,
    745, 714, 752, 605, 759, 648, 766, 622, 780, 471, 795, 348, 809, 226, 823, 183, 838, 194, 866, 221, 895, 251, 902, 234, 916, 200,
    924, 217, 938, 252, 966, 322, 973, 273, 981, 245, 988, 231, 1003, 233, 1017, 255, 1031, 342, 1059, 402, 1088, 464, 1103, 537,
    1124, 647, 1131, 608, 1146, 498, 1160, 400, 1174, 303, 1181, 262, 1196, 284, 1203, 339, 1210, 503, 1217, 669, 1232, 1071,
    1240, 1273, 1247, 1455, 1254, 1445, 1261, 1260, 1268, 1075, 1275, 955, 1282, 844, 1290, 897, 1296, 852, 1304, 837, 1311, 718,
    1325, 500, 1332, 402, 1346, 309, 1361, 195, 1454, 53];

function lengthAt(v) {
    for (var k = 2; k < profile.length; k += 2) {
        if (v <= profile[k]) {
            var t = (v - profile[k - 2]) / (profile[k] - profile[k - 2]);
            return profile[k - 1] + t * (profile[k + 1] - profile[k - 1]);
        }
    }
    return 53;
}

function drawChips() {
    var s = '', n = 195;
    for (var i = 0; i < n; i++) {
        var v = 57 + i * (1454 - 57) / (n - 1);
        s += rect(773, (990 + v / 1.889 - 2.5).toFixed(1), ((lengthAt(v) - 40) / 3).toFixed(1), 3.1, v > 1292 ? '#d3403b' : '#5a8fe3');
    }
    s += line(773, 1273, 1246, 1273, '#ecb04a', 3, 'stroke-dasharray="11 7"');
    [['11.34', 1033], ['10.83', 1216], ['10.32', 1418], ['9.8', 1620], ['9.29', 1803]].forEach(function (l) {
        var w = l[0].length === 5 ? 74 : l[0].length === 4 ? 61 : 43;
        s += text(l[0], 1242 - w, l[1], 34, '#999', w);
    });
    document.getElementById('chips').innerHTML = s;
}

drawKline();
drawMacd();
drawKdj();
drawChips();
```
